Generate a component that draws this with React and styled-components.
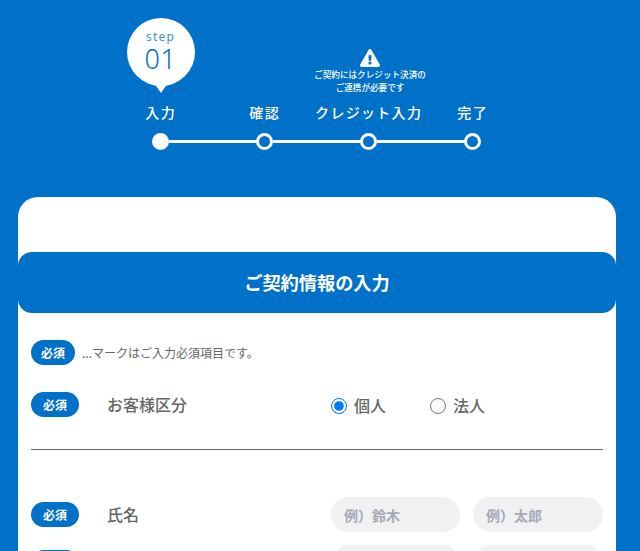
import React from "react";
import styled, { createGlobalStyle } from "styled-components";
import { FaExclamationTriangle } from "react-icons/fa";

const BLUE = "#0071c9";
const JP = `"Noto Sans CJK JP", "Noto Sans", sans-serif`;

const Global = createGlobalStyle`
  html, body { margin: 0; padding: 0; height: 100%; overflow: hidden; background: ${BLUE}; }
  body { font-family: ${JP}; }
  * { box-sizing: border-box; }
`;

const Page = styled.div`
  height: 551px;
  overflow: hidden;
  padding: 18px 24px 0 18px;
  background: ${BLUE};
`;

const Stepper = styled.ol`
  list-style: none;
  margin: 0 0 47px;
  padding: 0 0 0 90px;
  display: grid;
  grid-template-columns: repeat(4, 104px);
  align-items: end;
`;

const Step = styled.li`
  display: flex;
  flex-direction: column;
  align-items: center;
  min-width: 0;
`;

const Bubble = styled.div`
  position: relative;
  width: 68px;
  height: 68px;
  margin-bottom: 16px;
  margin-left: 1px;
  border-radius: 50%;
  background: #fff;
  display: flex;
  flex-direction: column;
  align-items: center;
  padding-top: 11px;
  font-family: "Noto Sans", sans-serif;
  &::after {
    content: "";
    position: absolute;
    left: 27px;
    bottom: -7px;
    border-left: 7px solid transparent;
    border-right: 7px solid transparent;
    border-top: 10px solid #fff;
  }
`;

const BubbleWord = styled.span`
  font-size: 12px;
  line-height: 16px;
  letter-spacing: 1.2px;
  color: #3f90d8;
`;

const BubbleNumber = styled.span`
  font-size: 27px;
  font-weight: 300;
  line-height: 27px;
  letter-spacing: 0.5px;
  color: ${BLUE};
`;

const Notice = styled.div`
  display: flex;
  flex-direction: column;
  align-items: center;
  margin: 0 0 9px 4px;
  color: #fff;
  font-size: 8.6px;
  font-weight: 500;
  line-height: 12.5px;
  text-align: center;
  white-space: nowrap;
  svg { display: block; width: 20px; height: 18px; margin-bottom: 1px; }
`;

const StepLabel = styled.span`
  height: 21px;
  padding-left: 1.3px;
  font-size: 14px;
  font-weight: 500;
  line-height: 21px;
  letter-spacing: 1.3px;
  color: #fff;
  white-space: nowrap;
`;

const Dot = styled.span`
  position: relative;
  width: 17px;
  height: 17px;
  margin-top: 10px;
  border-radius: 50%;
  border: 3px solid #fff;
  background: ${(p) => (p.$active ? "#fff" : BLUE)};
  &::after {
    content: "";
    display: ${(p) => (p.$last ? "none" : "block")};
    position: absolute;
    left: 14px;
    top: 4px;
    width: 90px;
    height: 3px;
    background: #fff;
  }
`;

const Card = styled.main`
  background: #fff;
  border-radius: 20px;
  padding-top: 55px;
`;

const Heading = styled.h1`
  margin: 0;
  height: 61px;
  padding-bottom: 1px;
  border-radius: 14px;
  background: ${BLUE};
  color: #fff;
  font-size: 18.2px;
  font-weight: 700;
  display: flex;
  align-items: center;
  justify-content: center;
`;

const Body = styled.form`
  padding: 27px 13px 0;
`;

const Badge = styled.span`
  flex: none;
  width: ${(p) => (p.$small ? "44px" : "48px")};
  height: 25px;
  border-radius: 13px;
  background: ${BLUE};
  color: #fff;
  font-size: 12px;
  font-weight: 700;
  display: flex;
  align-items: center;
  justify-content: center;
`;

const Note = styled.div`
  display: flex;
  align-items: center;
  gap: 7px;
  font-size: 12px;
  color: #666;
  margin-bottom: 27px;
`;

const Row = styled.div`
  display: flex;
  align-items: center;
`;

const DividedRow = styled(Row)`
  height: 58px;
  align-items: flex-start;
  border-bottom: 1px solid #666;
  margin-bottom: 47px;
`;

const FieldRow = styled(Row)`
  height: 35px;
  margin-bottom: 13px;
`;

const FieldLabel = styled.span`
  flex: none;
  width: 224px;
  margin-left: 28px;
  font-size: 16px;
  font-weight: 500;
  color: #666;
  line-height: 25px;
`;

const RadioGroup = styled.div`
  display: flex;
  gap: 44px;
`;

const RadioLabel = styled.label`
  display: flex;
  align-items: center;
  gap: 7px;
  font-size: 16px;
  font-weight: 500;
  color: #666;
  line-height: 27px;
`;

const Radio = styled.input`
  width: 16px;
  height: 16px;
  margin: 0;
`;

const Inputs = styled.div`
  flex: 1;
  min-width: 0;
  display: grid;
  grid-template-columns: 129px 130px;
  gap: 13px;
`;

const TextInput = styled.input`
  width: 100%;
  min-width: 0;
  height: 35px;
  border: 0;
  border-radius: 18px;
  background: #f1f0f2;
  padding: 0 13px;
  font-family: ${JP};
  font-size: 14px;
  font-weight: 700;
  &::placeholder { color: #a6a9b6; opacity: 1; }
`;

const steps = ["入力", "確認", "クレジット入力", "完了"];

export default function App() {
  return (
    <Page>
      <Global />
      <Stepper>
        {steps.map((s, i) => (
          <Step key={s}>
            {i === 0 && (
              <Bubble>
                <BubbleWord>step</BubbleWord>
                <BubbleNumber>01</BubbleNumber>
              </Bubble>
            )}
            {i === 2 && (
              <Notice>
                <FaExclamationTriangle />
                <span>ご契約にはクレジット決済の</span>
                <span>ご連携が必要です</span>
              </Notice>
            )}
            <StepLabel>{s}</StepLabel>
            <Dot $active={i === 0} $last={i === 3} />
          </Step>
        ))}
      </Stepper>
      <Card>
        <Heading>ご契約情報の入力</Heading>
        <Body>
          <Note>
            <Badge $small>必須</Badge>
            <span>...マークはご入力必須項目です。</span>
          </Note>
          <DividedRow>
            <Badge>必須</Badge>
            <FieldLabel>お客様区分</FieldLabel>
            <RadioGroup>
              <RadioLabel>
                <Radio type="radio" name="kind" defaultChecked />
                個人
              </RadioLabel>
              <RadioLabel>
                <Radio type="radio" name="kind" />
                法人
              </RadioLabel>
            </RadioGroup>
          </DividedRow>
          <FieldRow>
            <Badge>必須</Badge>
            <FieldLabel>氏名</FieldLabel>
            <Inputs>
              <TextInput placeholder="例）鈴木" />
              <TextInput placeholder="例）太郎" />
            </Inputs>
          </FieldRow>
          <FieldRow>
            <Badge>必須</Badge>
            <FieldLabel>フリガナ</FieldLabel>
            <Inputs>
              <TextInput />
              <TextInput />
            </Inputs>
          </FieldRow>
        </Body>
      </Card>
    </Page>
  );
}
